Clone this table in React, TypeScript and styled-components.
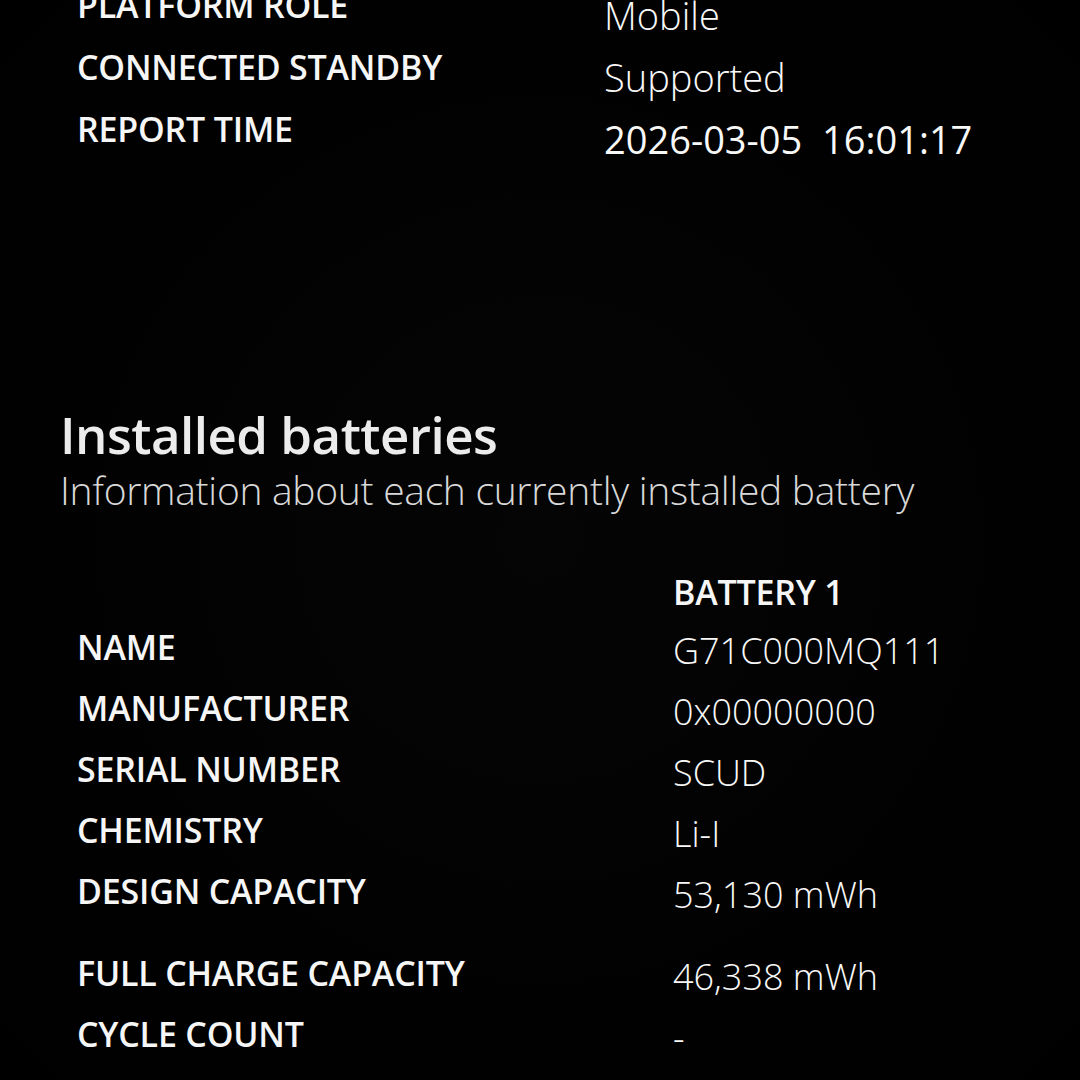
import React from "react";
import styled, { createGlobalStyle } from "styled-components";

const Global = createGlobalStyle`
  html, body { margin: 0; padding: 0; background: #020202; }
  body { width: 1080px; height: 1080px; overflow: hidden; }
  #root { width: 1080px; height: 1080px; }
`;

const Page = styled.div`
  width: 1080px;
  height: 1080px;
  box-sizing: border-box;
  padding: 0 60px;
  background: radial-gradient(ellipse at 50% 50%, #050505 0%, #010101 70%, #000 100%);
  color: #f4f4f4;
  font-family: "Open Sans", "Noto Sans", sans-serif;
  overflow: hidden;
  display: flex;
  flex-direction: column;
`;

const InfoTable = styled.div<{ $labelCol: number; $offset: number }>`
  display: grid;
  grid-template-columns: ${(p) => p.$labelCol}px 1fr;
  padding-left: 17px;
  margin-top: ${(p) => p.$offset}px;
  align-items: start;
`;

const Label = styled.div<{ $h: number }>`
  height: ${(p) => p.$h}px;
  font-size: 34px;
  line-height: 40px;
  font-weight: 600;
  letter-spacing: -0.2px;
  white-space: nowrap;
  color: #f6f6f6;
`;

const Value = styled.div<{ $h: number; $bold?: boolean; $pad: number; $size: number }>`
  height: ${(p) => p.$h}px;
  box-sizing: border-box;
  padding-top: ${(p) => p.$pad}px;
  font-size: ${(p) => p.$size}px;
  line-height: 48px;
  font-weight: ${(p) => (p.$bold ? 500 : 300)};
  white-space: pre;
  color: #f8f8f8;
`;

const SectionHead = styled.div`
  margin-top: 233px;
  display: flex;
  flex-direction: column;
`;

const Title = styled.h1`
  margin: 0;
  font-size: 51px;
  line-height: 60px;
  font-weight: 600;
  color: #ececec;
  letter-spacing: -0.5px;
`;

const Subtitle = styled.div`
  margin-top: 1px;
  font-size: 39px;
  line-height: 50px;
  font-weight: 300;
  color: #d8d8d8;
  letter-spacing: -0.3px;
`;

const Spacer = styled.div<{ $h: number }>`
  height: ${(p) => p.$h}px;
  grid-column: 1 / -1;
`;

const summary = [
  { label: "PLATFORM ROLE", value: "Mobile" },
  { label: "CONNECTED STANDBY", value: "Supported" },
  { label: "REPORT TIME", value: "2026-03-05  16:01:17", bold: true },
];

const battery = [
  { label: "NAME", value: "G71C000MQ111" },
  { label: "MANUFACTURER", value: "0x00000000" },
  { label: "SERIAL NUMBER", value: "SCUD" },
  { label: "CHEMISTRY", value: "Li-I" },
  { label: "DESIGN CAPACITY", value: "53,130 mWh", gapAfter: 21 },
  { label: "FULL CHARGE CAPACITY", value: "46,338 mWh" },
  { label: "CYCLE COUNT", value: "-" },
];

export default function App() {
  return (
    <>
      <Global />
      <Page>
        <InfoTable $labelCol={527} $offset={-15}>
          {summary.map((r) => (
            <React.Fragment key={r.label}>
              <Label $h={62}>{r.label}</Label>
              <Value $h={62} $pad={6} $size={38} $bold={r.bold}>
                {r.value}
              </Value>
            </React.Fragment>
          ))}
        </InfoTable>
        <SectionHead>
          <Title>Installed batteries</Title>
          <Subtitle>Information about each currently installed battery</Subtitle>
        </SectionHead>
        <InfoTable $labelCol={596} $offset={57}>
          <Label $h={55} />
          <Label $h={55}>BATTERY 1</Label>
          {battery.map((r) => (
            <React.Fragment key={r.label}>
              <Label $h={61}>{r.label}</Label>
              <Value $h={61} $pad={0} $size={36}>
                {r.value}
              </Value>
              {r.gapAfter ? <Spacer $h={r.gapAfter} /> : null}
            </React.Fragment>
          ))}
        </InfoTable>
      </Page>
    </>
  );
}
